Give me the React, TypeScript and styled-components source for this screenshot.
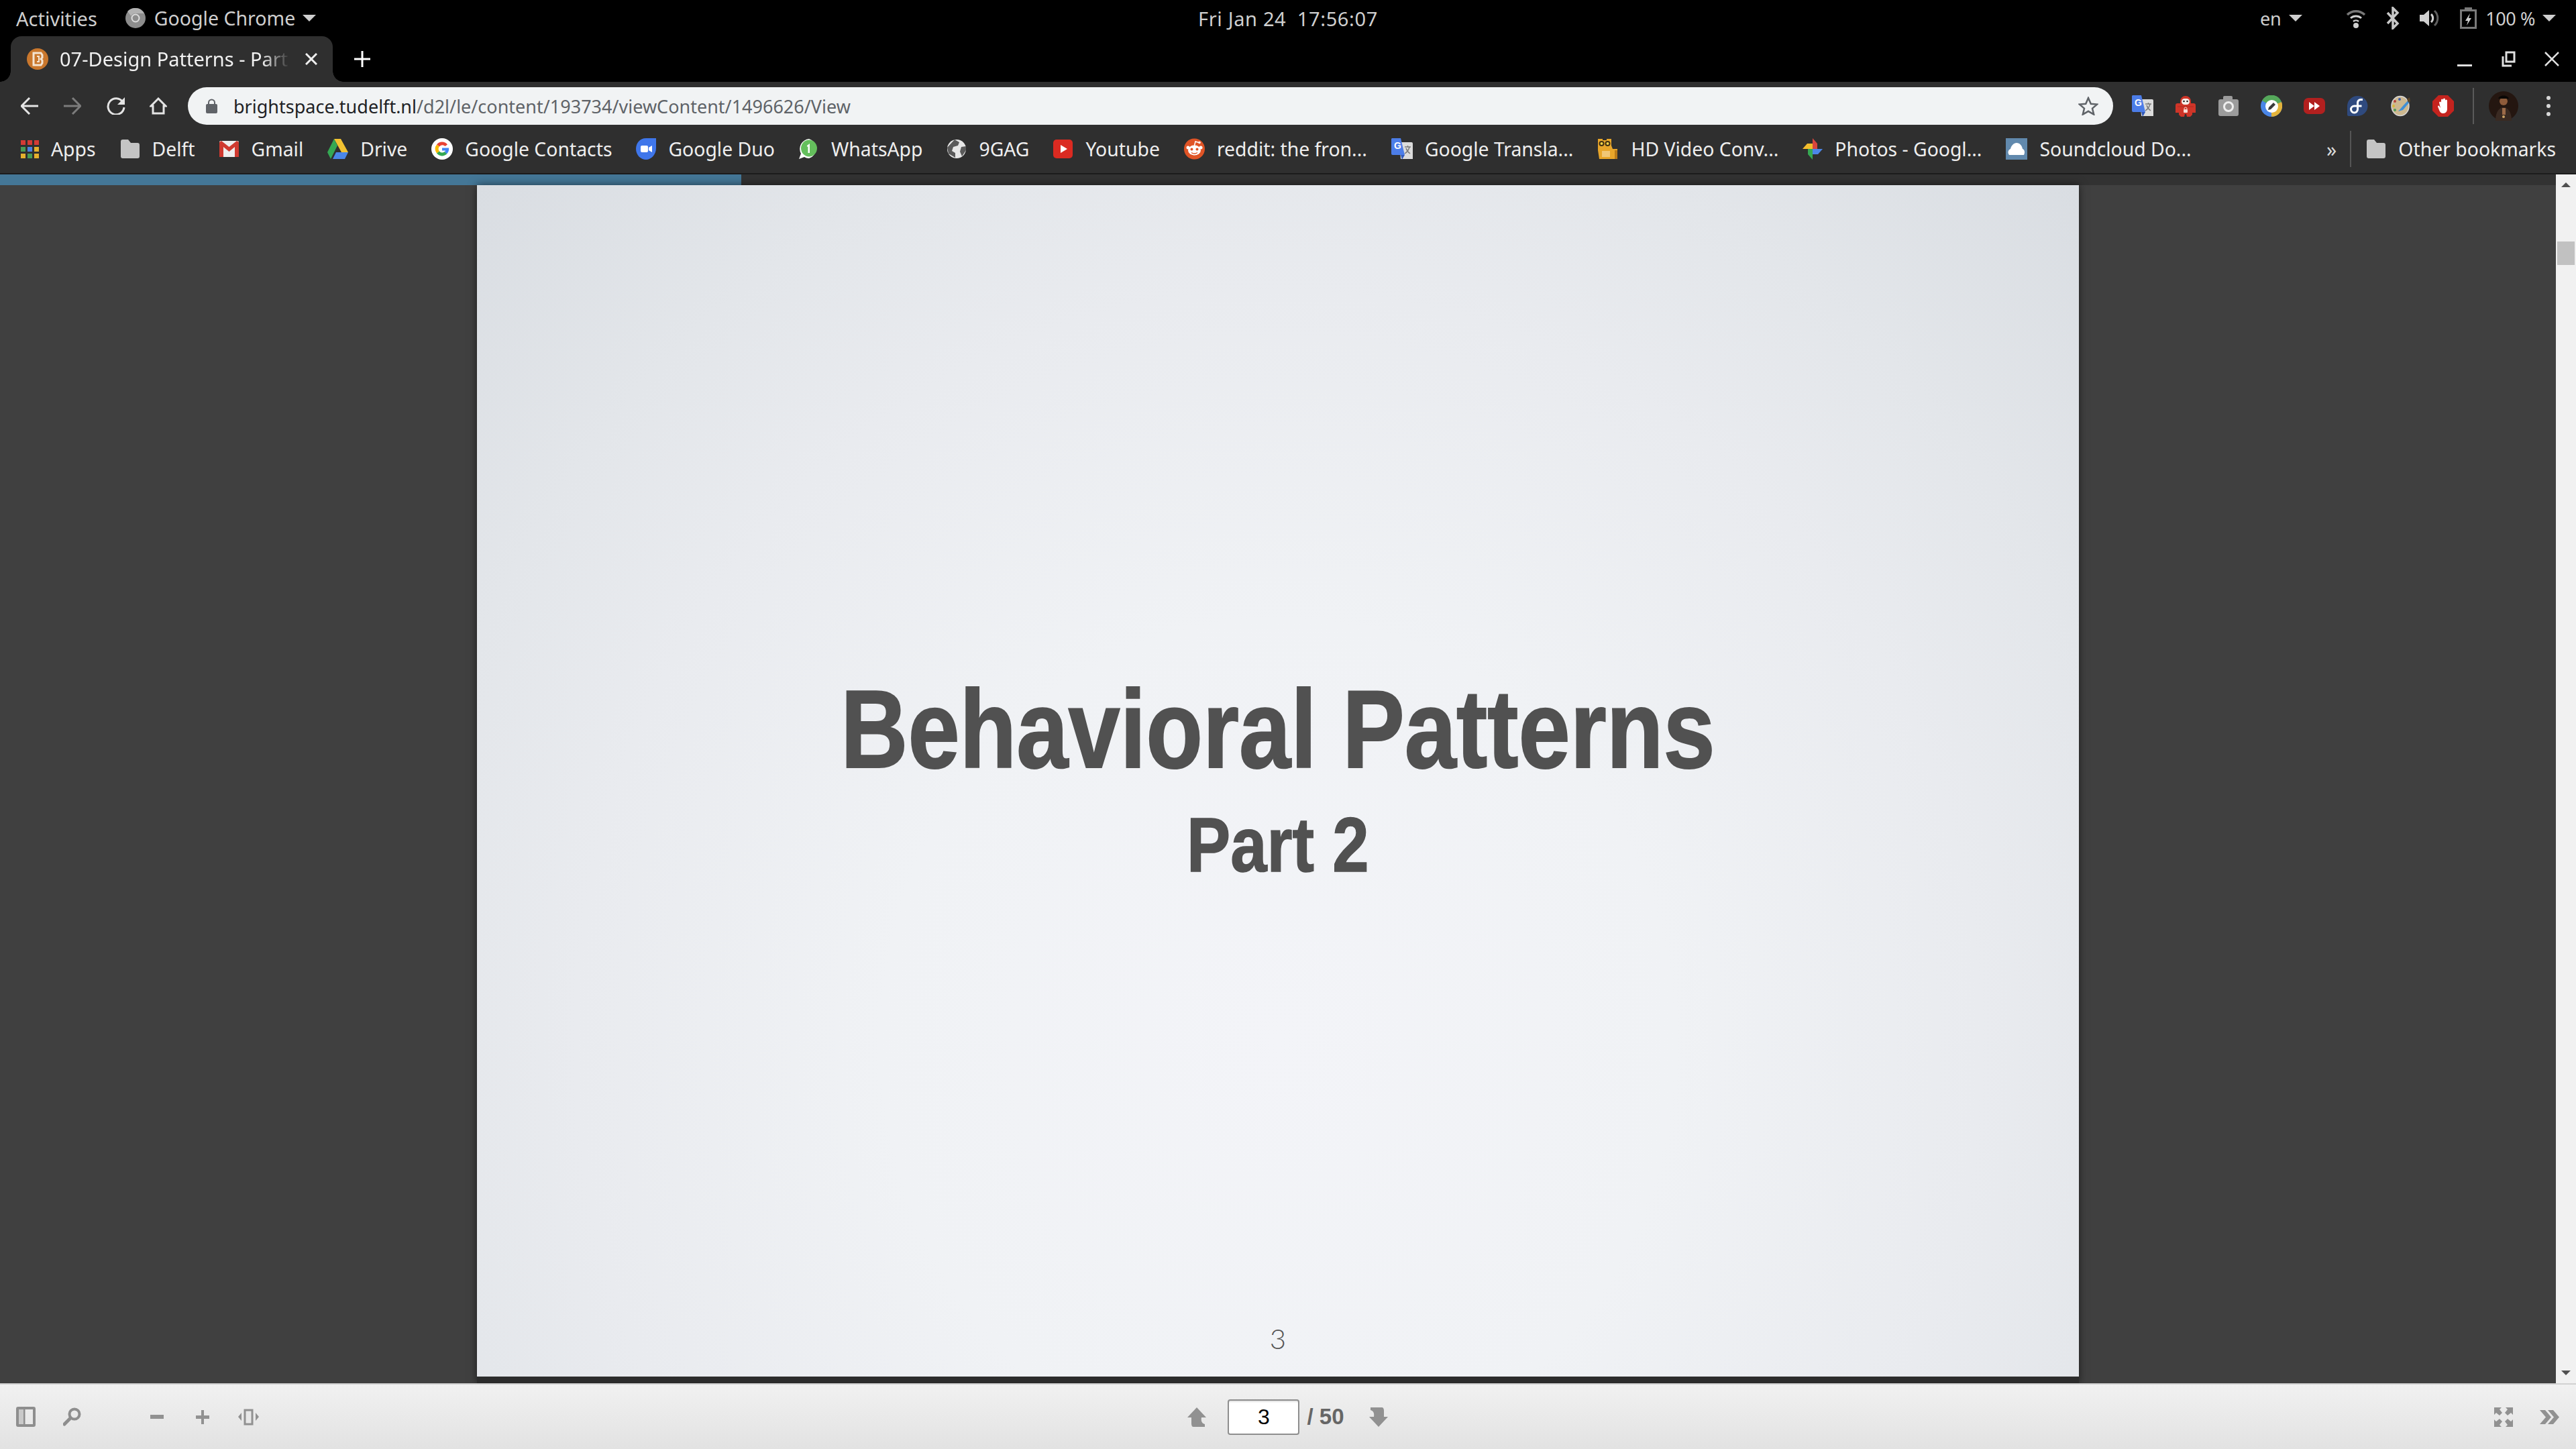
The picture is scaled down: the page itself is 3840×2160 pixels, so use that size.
import React from "react";
import styled, { createGlobalStyle } from "styled-components";

const GlobalStyle = createGlobalStyle`
  html, body {
    margin: 0;
    padding: 0;
    background: #000;
  }
  * {
    box-sizing: border-box;
  }
`;

const UI_FONT = `"Noto Sans", "Open Sans", sans-serif`;

const Screen = styled.div`
  width: 3840px;
  height: 2160px;
  display: flex;
  flex-direction: column;
  overflow: hidden;
  font-family: ${UI_FONT};
`;

/* gnome top bar */
const TopBar = styled.header`
  height: 54px;
  background: #000;
  color: #cfcfcf;
  font-size: 29px;
  display: grid;
  grid-template-columns: 1fr auto 1fr;
  align-items: center;
  padding: 0 30px 0 24px;
`;

const BarGroup = styled.div<{ $end?: boolean }>`
  display: flex;
  align-items: center;
  justify-content: ${(p) => (p.$end ? "flex-end" : "flex-start")};
`;

const BarText = styled.span<{ $left?: number }>`
  margin-left: ${(p) => p.$left ?? 0}px;
  font-size: 28.5px;
  white-space: pre;
`;

const Clock = styled.span`
  margin-left: 6px;
  font-size: 29px;
  letter-spacing: 0.65px;
  white-space: pre;
`;

const TrayText = styled.span<{ $left?: number }>`
  margin-left: ${(p) => p.$left ?? 0}px;
  font-size: 27px;
  letter-spacing: -0.4px;
  white-space: pre;
`;

const Caret = styled.i<{ $left: number; $color?: string }>`
  display: block;
  width: 0;
  height: 0;
  margin-left: ${(p) => p.$left}px;
  border-left: 10px solid transparent;
  border-right: 10px solid transparent;
  border-top: 10px solid ${(p) => p.$color ?? "#cfcfcf"};
`;

const TraySlot = styled.span<{ $left: number }>`
  display: flex;
  margin-left: ${(p) => p.$left}px;
`;

/* tabs */
const TabStrip = styled.div`
  height: 68px;
  background: #000;
  display: flex;
  align-items: stretch;
  padding: 0 25px 0 16px;
`;

const Tab = styled.div`
  position: relative;
  width: 480px;
  background: #2f2f2f;
  border-radius: 16px 16px 0 0;
  display: flex;
  align-items: center;
  padding: 0 23px 0 24px;
  color: #f1f1f1;
  font-size: 29px;
  &::before,
  &::after {
    content: "";
    position: absolute;
    bottom: 0;
    width: 16px;
    height: 16px;
    background: radial-gradient(circle at 0 0, #000 15.5px, #2f2f2f 16px);
  }
  &::before {
    left: -16px;
  }
  &::after {
    right: -16px;
    background: radial-gradient(circle at 100% 0, #000 15.5px, #2f2f2f 16px);
  }
`;

const TabTitle = styled.span`
  flex: 1;
  margin: 0 23px 2px 17px;
  overflow: hidden;
  white-space: nowrap;
  -webkit-mask-image: linear-gradient(90deg, #000 88%, transparent 100%);
  mask-image: linear-gradient(90deg, #000 88%, transparent 100%);
`;

const NewTab = styled.span`
  display: flex;
  align-items: center;
  margin-left: 32px;
`;

const WindowControls = styled.div`
  margin-left: auto;
  display: flex;
  align-items: center;
  gap: 43px;
`;

/* address row */
const Toolbar = styled.div`
  height: 64px;
  background: #2f2f2f;
  display: flex;
  align-items: center;
  padding: 8px 0 0 31px;
`;

const NavButton = styled.span<{ $width: number }>`
  display: flex;
  width: ${(p) => p.$width}px;
`;

const Omnibox = styled.div`
  width: 2870px;
  height: 56px;
  margin-left: 5px;
  border-radius: 28px;
  background: #f1f3f4;
  display: flex;
  align-items: center;
  padding: 0 22px 0 27px;
  font-size: 27px;
`;

const Url = styled.span`
  flex: 1;
  margin-left: 24px;
  color: #5f6368;
  white-space: nowrap;
  b {
    font-weight: 400;
    color: #202124;
  }
`;

const Extensions = styled.div`
  display: flex;
  align-items: center;
  margin-left: 28px;
  gap: 32px;
`;

const ExtSlot = styled.span`
  display: flex;
  justify-content: center;
  width: 32px;
`;

const ExtDivider = styled.span`
  width: 2px;
  height: 54px;
  background: #5a5a5a;
  margin-left: -4px;
`;

const Avatar = styled.span`
  display: flex;
  margin-left: -10px;
`;

const MenuDots = styled.span`
  display: flex;
  margin-left: 10px;
`;

/* bookmarks */
const Bookmarks = styled.nav`
  height: 74px;
  background: #2f2f2f;
  border-bottom: 2px solid #1c1c1c;
  display: flex;
  align-items: center;
  padding: 0 30px 0 31px;
  color: #eeeeee;
  font-size: 28.35px;
`;

const BookmarkList = styled.div`
  display: flex;
  align-items: center;
  gap: 36px;
`;

const BookmarkItem = styled.a`
  display: flex;
  align-items: center;
  gap: 18px;
  white-space: nowrap;
  line-height: 1;
`;

const Overflow = styled.span`
  margin-left: auto;
  color: #d8d8d8;
  font-size: 30px;
`;

const BarDivider = styled.span`
  width: 2px;
  height: 54px;
  background: #555;
  margin: 0 22px 0 20px;
`;

/* pdf viewer */
const Body = styled.div`
  flex: 1;
  min-height: 0;
  display: flex;
`;

const ViewerColumn = styled.div`
  flex: 1;
  display: flex;
  flex-direction: column;
`;

const Progress = styled.div`
  height: 16px;
  background: #323232;
`;

const ProgressFill = styled.div`
  height: 100%;
  background: #447797;
`;

const Viewer = styled.main`
  flex: 1;
  background: #404040;
  display: flex;
  justify-content: center;
  align-items: flex-start;
`;

const Slide = styled.section`
  width: 2388px;
  height: 1786px;
  border-bottom: 10px solid #2c2c2c;
  box-shadow: 0 0 12px rgba(0, 0, 0, 0.55);
  background: radial-gradient(
    ellipse farthest-corner at 50% 72%,
    #f3f4f8 0%,
    #f0f2f5 35%,
    #e9ebef 62%,
    #e3e6ea 78%,
    #d9dde2 100%
  );
  display: flex;
  flex-direction: column;
  align-items: center;
  padding-top: 721px;
  color: #515151;
`;

const SlideTitle = styled.h1`
  margin: 0;
  font-family: "Liberation Sans", Arial, sans-serif;
  font-weight: 700;
  font-size: 165px;
  line-height: 180px;
  white-space: nowrap;
  -webkit-text-stroke: 2px #515151;
  transform: scaleX(0.841);
`;

const SlideSubtitle = styled.h2`
  margin: 0;
  padding-top: 17px;
  font-family: "Liberation Sans", Arial, sans-serif;
  font-weight: 700;
  font-size: 115px;
  line-height: 130px;
  white-space: nowrap;
  -webkit-text-stroke: 1.5px #515151;
  transform: scaleX(0.85);
`;

const SlideNumber = styled.span`
  margin-top: auto;
  margin-bottom: 32px;
  font-family: Lato, sans-serif;
  font-weight: 300;
  font-size: 42px;
  line-height: 50px;
  color: #555;
`;

const ScrollTrack = styled.aside`
  width: 30px;
  background: #f1f1f1;
  display: flex;
  flex-direction: column;
  align-items: center;
  padding: 12px 0 12px;
`;

const ScrollArrow = styled.i<{ $down?: boolean }>`
  display: block;
  width: 0;
  height: 0;
  border-left: 7px solid transparent;
  border-right: 7px solid transparent;
  ${(p) =>
    p.$down
      ? "border-top: 7px solid #505050; margin-top: auto;"
      : "border-bottom: 7px solid #505050;"}
`;

const ScrollThumb = styled.div`
  width: 26px;
  height: 35px;
  margin-top: 81px;
  background: #c1c1c1;
`;

/* bottom pdf toolbar */
const PdfBar = styled.footer`
  height: 98px;
  border-top: 2px solid #d2d2d2;
  background: linear-gradient(#f1f1f1, #e2e2e2);
  display: grid;
  grid-template-columns: 1fr auto 1fr;
  align-items: center;
  padding: 0 25px 0 24px;
`;

const PdfGroup = styled.div<{ $end?: boolean }>`
  display: flex;
  align-items: center;
  justify-content: ${(p) => (p.$end ? "flex-end" : "flex-start")};
`;

const PdfIcon = styled.span<{ $left?: number }>`
  display: flex;
  margin-left: ${(p) => p.$left ?? 0}px;
`;

const PageInput = styled.div`
  width: 107px;
  height: 53px;
  margin-left: 32px;
  background: #fff;
  border: 2px solid #8e8e8e;
  border-radius: 4px;
  box-shadow: inset 0 3px 2px -1px #e4e4e4;
  color: #000;
  font-family: "Liberation Sans", Arial, sans-serif;
  font-size: 32px;
  text-align: center;
  line-height: 49px;
`;

const PageTotal = styled.span`
  margin-left: 11px;
  color: #666;
  font-family: "Liberation Sans", Arial, sans-serif;
  font-size: 33px;
  font-weight: 700;
  white-space: pre;
`;

type SvgProps = { w: number; h: number; children: React.ReactNode };

const Svg = ({ w, h, children }: SvgProps) => (
  <svg width={w} height={h} viewBox={`0 0 ${w} ${h}`} fill="none">
    {children}
  </svg>
);

const Stroke = "#e4e4e4";

const FolderIcon = () => (
  <Svg w={30} h={30}>
    <path d="M1 4a3 3 0 0 1 3-3h8l4 5h10a3 3 0 0 1 3 3v17a3 3 0 0 1-3 3H4a3 3 0 0 1-3-3z" fill="#c4c4c4" />
  </Svg>
);

const AppsIcon = () => {
  const colors = ["#d43a35", "#d43a35", "#d43a35", "#4a9a56", "#4d7fe0", "#e5b02d", "#e5b02d", "#4a9a56", "#e5b02d"];
  return (
    <Svg w={27} h={27}>
      {colors.map((c, i) => (
        <rect key={i} x={(i % 3) * 10} y={Math.floor(i / 3) * 10} width={7} height={7} fill={c} />
      ))}
    </Svg>
  );
};

const GmailIcon = () => (
  <Svg w={30} h={30}>
    <rect x={0} y={3} width={29} height={24} rx={2} fill="#eeeeee" />
    <path d="M0 5v22h6V12l8.500 7L23 12v15h6V5l-3-2-11.500 9L3 3z" fill="#cf3a30" />
  </Svg>
);

const DriveIcon = () => (
  <Svg w={31} h={32}>
    <path d="M10 1h10l11 20H21z" fill="#f2c232" />
    <path d="M10 1l5 10-10 20L0 21z" fill="#34a853" />
    <path d="M8 31l5-10h18l-5 10z" fill="#4a86e8" />
  </Svg>
);

const ContactsIcon = () => (
  <Svg w={32} h={32}>
    <circle cx={16} cy={16} r={16} fill="#fff" />
    <path d="M24 9.500A10 10 0 0 0 8 9.500l4 3a5.500 5.500 0 0 1 8.500-.500z" fill="#ea4335" />
    <path d="M8 9.500a10 10 0 0 0 0 13l4-3a5.500 5.500 0 0 1 0-7z" fill="#fbbc05" />
    <path d="M8 22.500a10 10 0 0 0 15.500.500l-3.500-3a5.500 5.500 0 0 1-8-.500z" fill="#34a853" />
    <path d="M26 14.500H16v4h5.200a5 5 0 0 1-1.500 1.800l3.500 3c2.500-2.500 3.300-5.500 2.800-8.800z" fill="#4285f4" />
  </Svg>
);

const DuoIcon = () => (
  <Svg w={30} h={32}>
    <path d="M15 0h15v15c0 9-7 17-15 17S0 25 0 16 6 0 15 0z" fill="#3f76ea" />
    <rect x={7} y={11} width={11} height={10} rx={2} fill="#fff" />
    <path d="M19 14l5-3v10l-5-3z" fill="#fff" />
  </Svg>
);

const WhatsAppIcon = () => (
  <Svg w={30} h={32}>
    <path d="M15 1a14 15 0 0 1 0 29c-3 0-5-1-7-2l-8 3 3-8A15 15 0 0 1 15 1z" fill="#fff" />
    <ellipse cx={15} cy={15} rx={12} ry={12.500} fill="#64bf5c" />
    <path d="M12 11l4-3v14h-2.500V12l-1.500 1z" fill="#fff" />
  </Svg>
);

const GagIcon = () => (
  <Svg w={30} h={30}>
    <circle cx={15} cy={15} r={14} fill="#e7e7e7" />
    <path d="M12 1l7 4-2 5-7 2-2 6 5 3v7L3 22 1 13zM22 12l7-1 0 6-6 9-3-7z" fill="#5a5a5a" />
  </Svg>
);

const YoutubeIcon = () => (
  <Svg w={30} h={30}>
    <rect x={0} y={1} width={29} height={28} rx={5} fill="#db2a21" />
    <path d="M11 9l10 6-10 6z" fill="#fff" />
  </Svg>
);

const RedditIcon = () => (
  <Svg w={31} h={32}>
    <circle cx={15.500} cy={16} r={15.500} fill="#e05426" />
    <circle cx={6} cy={14} r={2.500} fill="#fff" />
    <circle cx={25} cy={14} r={2.500} fill="#fff" />
    <ellipse cx={15.500} cy={18} rx={9.500} ry={7.500} fill="#fff" />
    <path d="M15.500 11l1.500-6 5 1.500" stroke="#fff" strokeWidth={1.500} />
    <circle cx={23} cy={6.500} r={1.800} fill="#fff" />
    <circle cx={11.500} cy={16.500} r={2} fill="#e05426" />
    <circle cx={19.500} cy={16.500} r={2} fill="#e05426" />
    <path d="M11 21.500c3 2 6 2 9 0" stroke="#e05426" strokeWidth={1.500} />
  </Svg>
);

const TranslateIcon = () => (
  <Svg w={32} h={32}>
    <path d="M12 6h18a2 2 0 0 1 2 2v23H14z" fill="#dcdcdc" />
    <path d="M20 13h9M24.500 11v2M27 13c-1 5-4 8-7 10M22 15c1 3 3 6 6 8" stroke="#7b7b7b" strokeWidth={1.500} />
    <path d="M1 0h13l6 25H2a2 2 0 0 1-2-2V1z" fill="#4c7de8" />
    <path d="M14 25h6l-4 7z" fill="#3159b8" />
    <text x={4} y={16} fontFamily="Liberation Sans, sans-serif" fontWeight={700} fontSize={14} fill="#fff">G</text>
  </Svg>
);

const OwlIcon = () => (
  <Svg w={32} h={32}>
    <path d="M1 1h7v2h6V1h7v10l2 5h7v15H3L1 18z" fill="#e8a62a" />
    <circle cx={6.500} cy={8} r={4} fill="#3f2f12" />
    <circle cx={15.500} cy={8} r={4} fill="#3f2f12" />
    <circle cx={6.500} cy={8} r={2} fill="#f4d24a" />
    <circle cx={15.500} cy={8} r={2} fill="#f4d24a" />
    <rect x={7} y={19} width={12} height={9} fill="#f1c877" />
    <rect x={26} y={18} width={4} height={13} fill="#b97a18" />
  </Svg>
);

const PhotosIcon = () => (
  <Svg w={30} h={32}>
    <path d="M15 16V0l7 8v8z" fill="#d9453d" />
    <path d="M15 16h15l-7 8h-8z" fill="#4c86e8" />
    <path d="M15 16v16l-7-8v-8z" fill="#36a852" />
    <path d="M15 16H0l7-8h8z" fill="#f2bd2d" />
  </Svg>
);

const CloudIcon = () => (
  <Svg w={32} h={32}>
    <rect width={32} height={32} fill="#6189ad" />
    <path d="M5 25c-3-4-1-8 2-9 1-5 5-9 9-9 5 0 8 4 9 9 3 1 4 5 2 9z" fill="#fff" />
  </Svg>
);

const bookmarks: { label: string; icon: React.ReactNode }[] = [
  { label: "Apps", icon: <AppsIcon /> },
  { label: "Delft", icon: <FolderIcon /> },
  { label: "Gmail", icon: <GmailIcon /> },
  { label: "Drive", icon: <DriveIcon /> },
  { label: "Google Contacts", icon: <ContactsIcon /> },
  { label: "Google Duo", icon: <DuoIcon /> },
  { label: "WhatsApp", icon: <WhatsAppIcon /> },
  { label: "9GAG", icon: <GagIcon /> },
  { label: "Youtube", icon: <YoutubeIcon /> },
  { label: "reddit: the fron...", icon: <RedditIcon /> },
  { label: "Google Transla...", icon: <TranslateIcon /> },
  { label: "HD Video Conv...", icon: <OwlIcon /> },
  { label: "Photos - Googl...", icon: <PhotosIcon /> },
  { label: "Soundcloud Do...", icon: <CloudIcon /> },
];

const extensionIcons: React.ReactNode[] = [
  <TranslateIcon key="t" />,
  <Svg key="r" w={30} h={32}>
    <path d="M7 9a8 8 0 0 1 16 0v3h4a3 3 0 0 1 3 3v11h-5v3l-3 3h-5l-1-4h-2l-1 4H8l-3-3v-3H0V15a3 3 0 0 1 3-3h4z" fill="#cf3528" />
    <rect x={9} y={5} width={12} height={9} rx={4.500} fill="#f5f0ec" />
    <circle cx={12.500} cy={9} r={1.300} fill="#222" />
    <circle cx={17.500} cy={9} r={1.300} fill="#222" />
    <path d="M3 17h24" stroke="#b02a20" strokeWidth={1} />
    <rect x={12} y={21} width={6} height={5} rx={1} fill="#f7dcd5" />
    <path d="M13 21v-1a2 2 0 0 1 4 0v1" stroke="#f7dcd5" strokeWidth={1} />
  </Svg>,
  <Svg key="c" w={30} h={30}>
    <rect y={5} width={30} height={25} rx={3} fill="#9c9c9c" />
    <rect x={7} y={0} width={14} height={8} rx={2} fill="#9c9c9c" />
    <circle cx={15} cy={16} r={6.500} stroke="#eeeeee" strokeWidth={3} />
  </Svg>,
  <Svg key="p" w={32} h={32}>
    <circle cx={16} cy={16} r={16} fill="#4a86e8" />
    <path d="M16 16L2 8A16 16 0 0 1 31 10z" fill="#55a85a" />
    <path d="M16 16l15-6A16 16 0 0 1 16 32z" fill="#e3b33b" />
    <circle cx={16.500} cy={16.500} r={9.500} fill="#fff" />
    <path d="M11 22l1-4 7-7 3 3-7 7z" fill="#3a3a3a" />
  </Svg>,
  <Svg key="f" w={32} h={30}>
    <rect width={32} height={24} y={3} rx={7} fill="#b2201f" />
    <path d="M8 9l8 6-8 6zM16 9l8 6-8 6z" fill="#fff" />
  </Svg>,
  <Svg key="fd" w={31} h={32}>
    <path d="M15.500 1A15 15 0 0 1 15.500 31H2a2 2 0 0 1-2-2V16A15.500 15 0 0 1 15.500 1z" fill="#2f4a7e" />
    <path d="M23 6.500h-3a4.500 4.500 0 0 0-4.500 4.500v10a5 5 0 0 1-5 5 5 5 0 0 1 0-10h11" stroke="#fff" strokeWidth={3} />
  </Svg>,
  <Svg key="pa" w={29} h={32}>
    <ellipse cx={14} cy={16} rx={13} ry={14.500} fill="#cdb88f" stroke="#d8d8d8" strokeWidth={1.500} />
    <circle cx={13} cy={6} r={2} fill="#3e5ea8" />
    <circle cx={6} cy={9} r={2} fill="#b8423a" />
    <circle cx={4} cy={16} r={2} fill="#d9b93a" />
    <circle cx={6} cy={22} r={2} fill="#4c9a56" />
    <path d="M28 5L17 17l-6 7 7-2 10-12z" fill="#3f8fd6" />
    <path d="M24 6l4-3 1 6-3 2z" fill="#5b4528" />
  </Svg>,
  <Svg key="s" w={32} h={32}>
    <path d="M9 0h14l9 9v14l-9 9H9l-9-9V9z" fill="#c4231e" />
    <path d="M10 11a1.500 1.500 0 0 1 3 0v4V7a1.500 1.500 0 0 1 3 0v8V6a1.500 1.500 0 0 1 3 0v9V8a1.500 1.500 0 0 1 3 0v12c0 4-2 7-6 7-3 0-5-2-6-5l-2-5c0-1 1-2 2-1l2 3z" fill="#fff" />
  </Svg>,
];

export default function App() {
  return (
    <Screen>
      <GlobalStyle />
      <TopBar>
        <BarGroup>
          <span>Activities</span>
          <TraySlot $left={42}>
            <Svg w={30} h={30}>
              <circle cx={15} cy={15} r={15} fill="#8d8d8d" />
              <path d="M15 0a15 15 0 0 1 13 8H15a7 7 0 0 0-6.500 4L3 5A15 15 0 0 1 15 0z" fill="#b2b2b2" />
              <circle cx={15} cy={15} r={5.500} fill="#8d8d8d" stroke="#ddd" strokeWidth={2} />
            </Svg>
          </TraySlot>
          <BarText $left={13}>Google Chrome</BarText>
          <Caret $left={11} />
        </BarGroup>
        <Clock>Fri Jan 24  17:56:07</Clock>
        <BarGroup $end>
          <TrayText>en</TrayText>
          <Caret $left={12} />
          <TraySlot $left={65}>
            <Svg w={30} h={30}>
              <path d="M2 10a19 19 0 0 1 26 0" stroke="#777" strokeWidth={3.500} />
              <path d="M7 15a12 12 0 0 1 16 0" stroke="#d0d0d0" strokeWidth={3} />
              <path d="M11 20a6 6 0 0 1 8 0" stroke="#d0d0d0" strokeWidth={2.500} />
              <circle cx={15} cy={26} r={4} fill="#d0d0d0" />
            </Svg>
          </TraySlot>
          <TraySlot $left={30}>
            <Svg w={20} h={34}>
              <path d="M2 9l15 16-7 7V2l7 7L2 25" stroke="#c8c8c8" strokeWidth={3.500} />
            </Svg>
          </TraySlot>
          <TraySlot $left={30}>
            <Svg w={30} h={30}>
              <path d="M0 10h6l8-7v24l-8-7H0z" fill="#cfcfcf" />
              <path d="M17 9a8 8 0 0 1 0 12" stroke="#cfcfcf" strokeWidth={3} />
              <path d="M22 4a15 15 0 0 1 0 22" stroke="#5f5f5f" strokeWidth={3} />
            </Svg>
          </TraySlot>
          <TraySlot $left={30}>
            <Svg w={25} h={32}>
              <path d="M7 0h11v3h7v29H0V3h7z" fill="#7a7a7a" />
              <rect x={3} y={6} width={19} height={23} fill="#000" />
              <path d="M15 9l-7 11h4l-2 7 7-11h-4z" fill="#d0d0d0" />
            </Svg>
          </TraySlot>
          <TrayText $left={13}>100 %</TrayText>
          <Caret $left={11} />
        </BarGroup>
      </TopBar>

      <TabStrip>
        <Tab>
          <Svg w={32} h={32}>
            <ellipse cx={16} cy={16} rx={16} ry={16} fill="#c9772d" />
            <path d="M10 7h11l2 3v4l-2 2 2 2v4l-2 3H10z" fill="none" stroke="#f4e4d2" strokeWidth={3} />
            <path d="M15 12h3v8h-3" stroke="#f4e4d2" strokeWidth={2} />
          </Svg>
          <TabTitle>07-Design Patterns - Part 2</TabTitle>
          <Svg w={18} h={18}>
            <path d="M1 1l16 16M17 1L1 17" stroke="#efefef" strokeWidth={3} />
          </Svg>
        </Tab>
        <NewTab>
          <Svg w={24} h={24}>
            <path d="M12 0v24M0 12h24" stroke="#fff" strokeWidth={3} />
          </Svg>
        </NewTab>
        <WindowControls>
          <Svg w={22} h={24}>
            <rect y={20} width={22} height={3} fill="#e0e0e0" />
          </Svg>
          <Svg w={22} h={24}>
            <path d="M8 2h12v14H8zM3 8v14h13" stroke="#e0e0e0" strokeWidth={3} />
          </Svg>
          <Svg w={22} h={22}>
            <path d="M1 1l20 20M21 1L1 21" stroke="#e0e0e0" strokeWidth={2.500} />
          </Svg>
        </WindowControls>
      </TabStrip>

      <Toolbar>
        <NavButton $width={64}>
          <Svg w={26} h={26}>
            <path d="M13 1L1 13l12 12M1 13h25" stroke={Stroke} strokeWidth={3} />
          </Svg>
        </NavButton>
        <NavButton $width={64}>
          <Svg w={26} h={26}>
            <path d="M13 1l12 12-12 12M25 13H0" stroke="#7c7c7c" strokeWidth={3} />
          </Svg>
        </NavButton>
        <NavButton $width={64}>
          <Svg w={28} h={26}>
            <path d="M24 7A12 12 0 1 0 26 15" stroke={Stroke} strokeWidth={3} />
            <path d="M27 0v11H16z" fill={Stroke} />
          </Svg>
        </NavButton>
        <NavButton $width={52}>
          <Svg w={26} h={26}>
            <path d="M13 2L2 13h3v11h16V13h3z" stroke={Stroke} strokeWidth={3} />
          </Svg>
        </NavButton>
        <Omnibox>
          <Svg w={17} h={22}>
            <path d="M4 9V6a4.500 4.500 0 0 1 9 0v3" stroke="#606368" strokeWidth={2} />
            <rect y={8} width={17} height={14} rx={2} fill="#606368" />
          </Svg>
          <Url>
            <b>brightspace.tudelft.nl</b>/d2l/le/content/193734/viewContent/1496626/View
          </Url>
          <Svg w={30} h={28}>
            <path d="M15 2l3.800 8.800 9.200.800-7 6 2.200 9-8.200-4.800-8.200 4.800 2.200-9-7-6 9.200-.800z" stroke="#5f6368" strokeWidth={2.500} />
          </Svg>
        </Omnibox>
        <Extensions>
          {extensionIcons.map((icon, i) => (
            <ExtSlot key={i}>{icon}</ExtSlot>
          ))}
          <ExtDivider />
          <Avatar>
            <Svg w={44} h={44}>
              <circle cx={22} cy={22} r={22} fill="#241610" />
              <circle cx={22} cy={15} r={6} fill="#8e5b3a" />
              <path d="M14 11c2-6 14-6 16 0z" fill="#0b0806" />
              <path d="M10 44c0-14 6-20 12-20s12 6 12 20z" fill="#3a2a22" />
              <path d="M20 25h5v10h-5z" fill="#9b6a48" />
              <circle cx={22} cy={38} r={2} fill="#c9a063" />
            </Svg>
          </Avatar>
          <MenuDots>
            <Svg w={6} h={30}>
              <circle cx={3} cy={3} r={3} fill="#d8d8d8" />
              <circle cx={3} cy={15} r={3} fill="#d8d8d8" />
              <circle cx={3} cy={27} r={3} fill="#d8d8d8" />
            </Svg>
          </MenuDots>
        </Extensions>
      </Toolbar>

      <Bookmarks>
        <BookmarkList>
          {bookmarks.map((b) => (
            <BookmarkItem key={b.label}>
              {b.icon}
              {b.label}
            </BookmarkItem>
          ))}
        </BookmarkList>
        <Overflow>»</Overflow>
        <BarDivider />
        <BookmarkItem>
          <FolderIcon />
          Other bookmarks
        </BookmarkItem>
      </Bookmarks>

      <Body>
        <ViewerColumn>
          <Progress>
            <ProgressFill style={{ width: `${(1105 / 3810) * 100}%` }} />
          </Progress>
          <Viewer>
            <Slide>
              <SlideTitle>Behavioral Patterns</SlideTitle>
              <SlideSubtitle>Part 2</SlideSubtitle>
              <SlideNumber>3</SlideNumber>
            </Slide>
          </Viewer>
        </ViewerColumn>
        <ScrollTrack>
          <ScrollArrow />
          <ScrollThumb />
          <ScrollArrow $down />
        </ScrollTrack>
      </Body>

      <PdfBar>
        <PdfGroup>
          <PdfIcon>
            <Svg w={29} h={30}>
              <rect x={2} y={2} width={25} height={26} rx={1} stroke="#8e8e8e" strokeWidth={4} />
              <rect x={4} y={4} width={7} height={22} fill="#c9c9c9" />
              <rect x={11} y={3} width={2.500} height={24} fill="#8e8e8e" />
            </Svg>
          </PdfIcon>
          <PdfIcon $left={41}>
            <Svg w={27} h={28}>
              <circle cx={17} cy={10} r={7.500} stroke="#8e8e8e" strokeWidth={4} />
              <path d="M11 16l-9 9" stroke="#8e8e8e" strokeWidth={5} strokeLinecap="round" />
            </Svg>
          </PdfIcon>
          <PdfIcon $left={103}>
            <Svg w={20} h={6}>
              <rect width={20} height={6} fill="#919191" />
            </Svg>
          </PdfIcon>
          <PdfIcon $left={48}>
            <Svg w={20} h={21}>
              <path d="M0 8h8V0h4v8h8v5h-8v8H8v-8H0z" fill="#919191" />
            </Svg>
          </PdfIcon>
          <PdfIcon $left={43}>
            <Svg w={31} h={25}>
              <path d="M0 12l5-6v12zM31 12l-5-6v12z" fill="#919191" />
              <rect x={10} y={2} width={11} height={21} stroke="#919191" strokeWidth={3} fill="#e8e8e8" />
            </Svg>
          </PdfIcon>
        </PdfGroup>
        <PdfGroup>
          <Svg w={28} h={29}>
            <path d="M14 0l14 15h-7c-1 6 1 9 5 10v4H9c-2 0-3-2-3-5v-9H0z" fill="#919191" />
          </Svg>
          <PageInput>3</PageInput>
          <PageTotal>/ 50</PageTotal>
          <PdfIcon $left={37}>
            <Svg w={28} h={29}>
              <path d="M14 29L0 14h7C8 8 6 5 2 4V0h17c2 0 3 2 3 5v9h6z" fill="#919191" />
            </Svg>
          </PdfIcon>
        </PdfGroup>
        <PdfGroup $end>
          <Svg w={28} h={29}>
            <path d="M0 0h11L8 3l4 5-4 4-5-4-3 3zM28 0H17l3 3-4 5 4 4 5-4 3 3zM0 29h11l-3-3 4-5-4-4-5 4-3-3zM28 29H17l3-3-4-5 4-4 5 4 3-3z" fill="#919191" />
          </Svg>
          <PdfIcon $left={40}>
            <Svg w={29} h={21}>
              <path d="M0 0h8l9 10.500L8 21H0l9-10.500zM12 0h8l9 10.500L20 21h-8l9-10.500z" fill="#919191" />
            </Svg>
          </PdfIcon>
        </PdfGroup>
      </PdfBar>
    </Screen>
  );
}
